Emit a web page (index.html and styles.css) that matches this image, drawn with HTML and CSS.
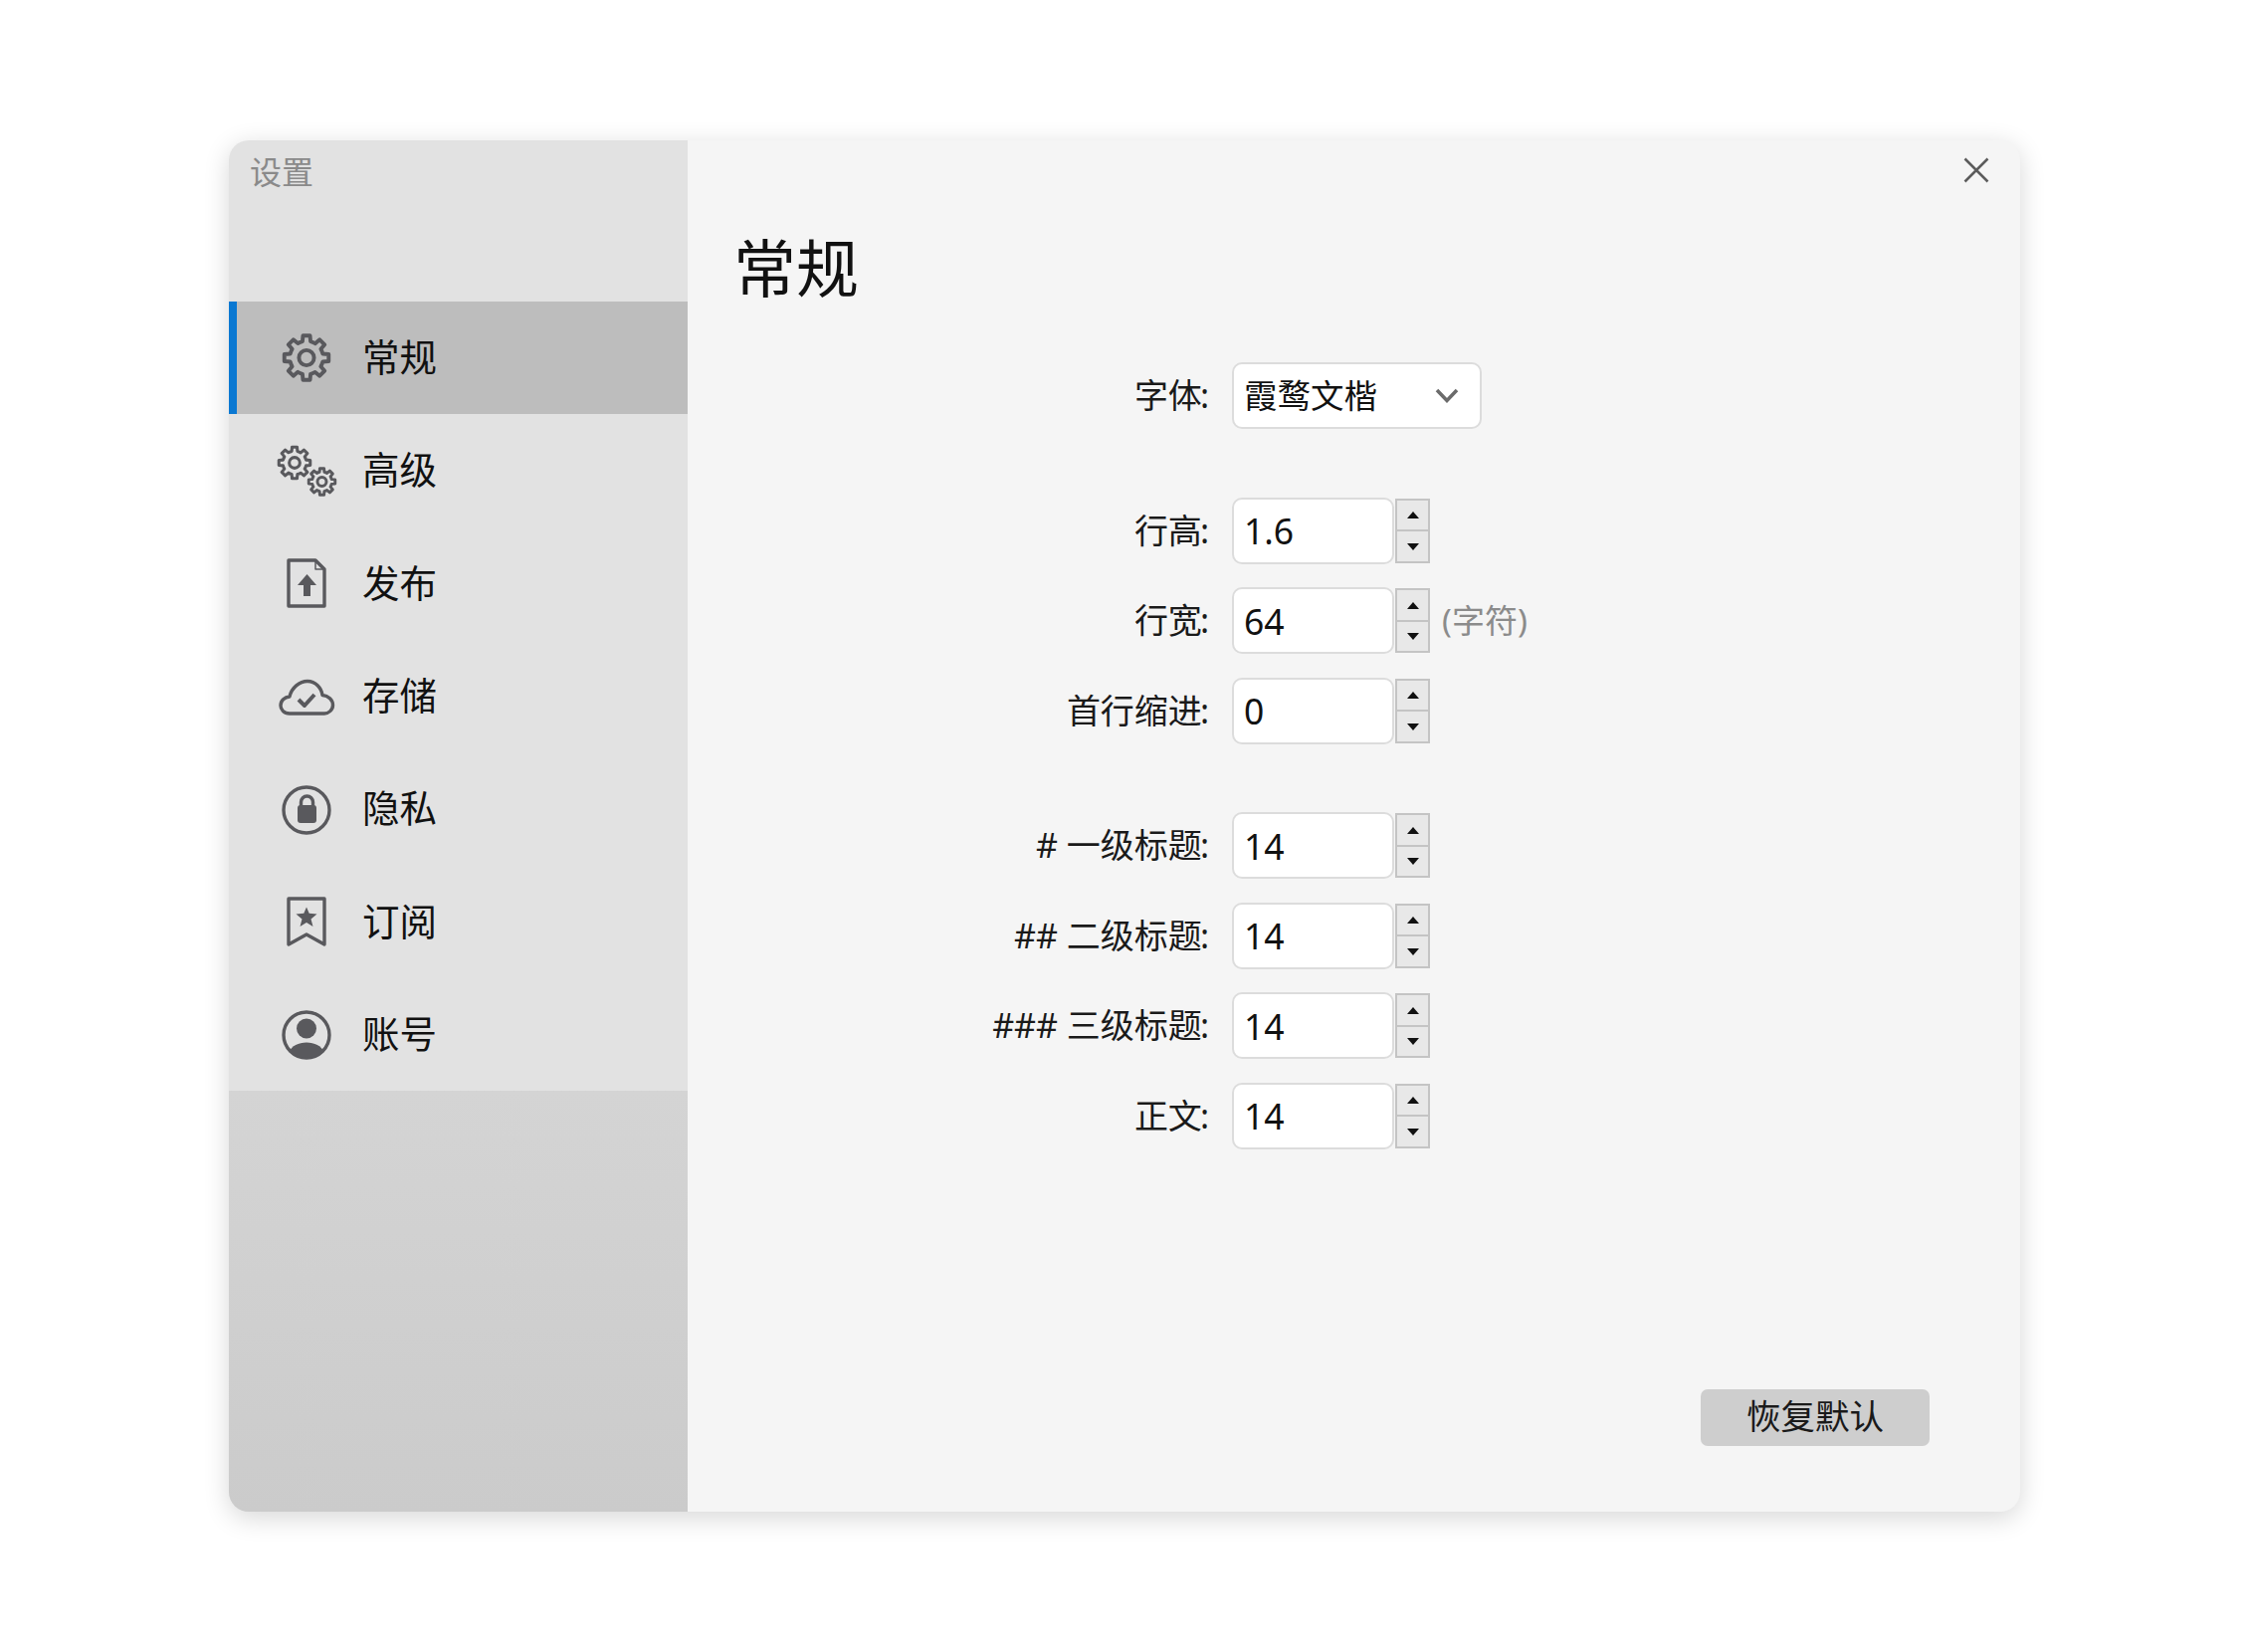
FILE: index.html
```html
<!DOCTYPE html>
<html lang="zh-CN">
<head>
<meta charset="utf-8">
<title>设置</title>
<link rel="stylesheet" href="styles.css">
</head>
<body>
<svg class="defs" width="0" height="0"><defs>
<path id="gear" d="M7.96-1.98L10.86-1.72L10.86 1.72L7.96 1.98A8.2 8.2 0 0 1 7 4.23L8.9 6.46L6.46 8.9L4.23 7.03A8.2 8.2 0 0 1 1.98 7.96L1.72 10.86L-1.72 10.86L-1.98 7.96A8.2 8.2 0 0 1-4.23 7L-6.46 8.9L-8.9 6.46L-7.03 4.23A8.2 8.2 0 0 1-7.96 1.98L-10.86 1.72L-10.86-1.72L-7.96-1.98A8.2 8.2 0 0 1-7-4.23L-8.9-6.46L-6.46-8.9L-4.23-7.03A8.2 8.2 0 0 1-1.98-7.96L-1.72-10.86L1.72-10.86L1.98-7.96A8.2 8.2 0 0 1 4.23-7L6.46-8.9L8.9-6.46L7.03-4.23A8.2 8.2 0 0 1 7.96-1.98Z"/>
</defs></svg>
<main class="window">
  <aside class="sidebar">
    <div class="app-title">设置</div>
    <nav class="nav">
      <a class="nav-item active">
        <svg class="nav-icon" viewBox="0 0 64 52"><g transform="translate(32 25.500) scale(2.05)" class="ln gear-lg"><use href="#gear"/><circle r="3.7"/></g></svg>
        <span>常规</span>
      </a>
      <a class="nav-item">
        <svg class="nav-icon" viewBox="0 0 64 52"><g transform="translate(20 18) scale(1.45)" class="ln gear-md"><use href="#gear"/><circle r="3.7"/></g><g transform="translate(47.500 37) scale(1.22)" class="ln gear-sm"><use href="#gear"/><circle r="3.7"/></g></svg>
        <span>高级</span>
      </a>
      <a class="nav-item">
        <svg class="nav-icon" viewBox="0 0 64 52"><path class="ln" d="M14 3H41L50 12V49H14Z"/><path class="ln thin" d="M41 3V12H50"/><path class="fl" d="M32.500 17L42 28H36V39H29V28H23Z"/></svg>
        <span>发布</span>
      </a>
      <a class="nav-item">
        <svg class="nav-icon" viewBox="0 0 64 52"><path class="ln" d="M15 43C9 43 6 38.500 6 35C6 30 10 26.500 15 26C17 17 25 10.500 33 10.500C41 10.500 47 17 48 24.500C54 25 58.500 29.500 58.500 34.500C58.500 39.500 54 43 50 43Z"/><path class="ln chk" d="M24 29L30 35L40 24"/></svg>
        <span>存储</span>
      </a>
      <a class="nav-item">
        <svg class="nav-icon" viewBox="0 0 64 52"><circle class="ln" cx="32" cy="27" r="23"/><path class="ln" d="M26.500 23V19a6 6 0 0 1 12 0V23"/><rect class="fl" x="23" y="22" width="19" height="18" rx="3"/></svg>
        <span>隐私</span>
      </a>
      <a class="nav-item">
        <svg class="nav-icon" viewBox="0 0 64 52"><path class="ln" d="M14 3H50V49L32 39L14 49Z"/><path class="fl" d="M32 11.500L34.700 17.800L42.500 18.500L36.500 23.500L38.500 31L32 27L25.500 31L27.500 23.500L21.500 18.500L29.300 17.800Z"/></svg>
        <span>订阅</span>
      </a>
      <a class="nav-item">
        <svg class="nav-icon" viewBox="0 0 64 52"><circle class="ln" cx="32" cy="27" r="23"/><circle class="fl" cx="32" cy="20.500" r="10"/><path class="fl" d="M14.500 44C17 38 24 34.500 32 34.500C40 34.500 47 38 49.500 44C45 48 39 50 32 50C25 50 19 48 14.500 44Z"/></svg>
        <span>账号</span>
      </a>
    </nav>
    <div class="sidebar-rest"></div>
  </aside>
  <section class="content">
    <button class="close" aria-label="关闭"><svg viewBox="0 0 26 26" width="26" height="26"><path d="M1.500 1.500L24.500 24.500M24.500 1.500L1.500 24.500"/></svg></button>
    <h1 class="heading">常规</h1>
    <form class="form">
      <div class="row group">
        <label class="lbl">字体<i>:</i></label>
        <div class="select"><span>霞鹜文楷</span><svg class="chev" viewBox="0 0 24 15" width="24" height="15"><path d="M2 2L12 12.500L22 2"/></svg></div>
      </div>
      <div class="row">
        <label class="lbl">行高<i>:</i></label>
        <div class="num">1.6</div>
        <div class="spin"><b class="up"></b><b class="down"></b></div>
      </div>
      <div class="row">
        <label class="lbl">行宽<i>:</i></label>
        <div class="num">64</div>
        <div class="spin"><b class="up"></b><b class="down"></b></div>
        <span class="unit">(字符)</span>
      </div>
      <div class="row group">
        <label class="lbl">首行缩进<i>:</i></label>
        <div class="num">0</div>
        <div class="spin"><b class="up"></b><b class="down"></b></div>
      </div>
      <div class="row">
        <label class="lbl"># 一级标题<i>:</i></label>
        <div class="num">14</div>
        <div class="spin"><b class="up"></b><b class="down"></b></div>
      </div>
      <div class="row">
        <label class="lbl">## 二级标题<i>:</i></label>
        <div class="num">14</div>
        <div class="spin"><b class="up"></b><b class="down"></b></div>
      </div>
      <div class="row">
        <label class="lbl">### 三级标题<i>:</i></label>
        <div class="num">14</div>
        <div class="spin"><b class="up"></b><b class="down"></b></div>
      </div>
      <div class="row">
        <label class="lbl">正文<i>:</i></label>
        <div class="num">14</div>
        <div class="spin"><b class="up"></b><b class="down"></b></div>
      </div>
    </form>
    <div class="actions"><button class="reset" type="button">恢复默认</button></div>
  </section>
</main>
</body>
</html>
```
FILE: styles.css
```css
* { box-sizing: border-box; }
html, body { margin: 0; height: 100%; }
body {
  background: #fff;
  padding: 141px 230px 0;
  font-family: "Noto Sans", "Noto Sans CJK SC", sans-serif;
  color: #111;
}
.defs { position: absolute; }
.window {
  display: flex;
  width: 1800px;
  height: 1378px;
  border-radius: 20px;
  overflow: hidden;
  box-shadow: 0 6px 26px rgba(0,0,0,.16);
  background: #f5f5f5;
}
.sidebar { width: 461px; display: flex; flex-direction: column; background: #e2e2e2; }
.app-title { height: 162px; padding: 12px 0 0 21px; font-size: 32px; line-height: 40px; color: #8a8a8a; }
.nav { display: flex; flex-direction: column; }
.nav-item {
  height: 113.300px; display: flex; align-items: center; gap: 24px;
  padding-left: 46px; font-size: 37.500px; line-height: 48px; color: #111;
}
.nav-item span { padding-bottom: 1px; }
.nav-item.active { background: #bdbdbd; border-left: 8px solid #0a78d2; padding-left: 38px; }
.nav-icon { width: 64px; height: 52px; flex: none; }
.ln { fill: none; stroke: #59595d; stroke-width: 3.400; stroke-linejoin: round; }
.ln.thin { stroke-width: 1.500; }
.ln.chk { stroke-width: 4; }
.ln.gear-lg { stroke-width: 1.900; }
.ln.gear-md { stroke-width: 2.100; }
.ln.gear-sm { stroke-width: 2.400; }
.fl { fill: #59595d; }
.sidebar-rest { flex: 1; background: linear-gradient(#d4d4d4, #cbcbcb); }
.content { flex: 1; position: relative; padding: 83px 46px 0; display: flex; flex-direction: column; }
.close { position: absolute; top: 17px; right: 31px; padding: 0; border: 0; background: none; line-height: 0; }
.close path { fill: none; stroke: #5c5c5c; stroke-width: 2.500; }
.heading { margin: 0; font-size: 63px; font-weight: 400; line-height: 90px; color: #111; }
.form { margin-top: 50px; display: flex; flex-direction: column; gap: 23.500px; flex: none; }
.row { display: flex; align-items: center; height: 67px; }
.row.group { margin-bottom: 45px; }
.lbl { width: 478px; text-align: right; margin-right: 23px; font-size: 34px; line-height: 46px; padding-bottom: 1px; white-space: nowrap; color: #1a1a1a; flex: none; }
.lbl i { font-style: normal; margin-left: -2px; }
.select, .num {
  height: 67px; background: #fff; border: 2px solid #dcdcdc; border-radius: 10px;
  font-size: 35.500px; display: flex; align-items: center; padding-left: 10px;
}
.select { width: 251px; justify-content: space-between; padding-right: 21px; font-size: 33.500px; line-height: 44px; padding-bottom: 1px; }
.chev path { fill: none; stroke: #6b6b6b; stroke-width: 3.500; }
.num { width: 163px; }
.spin { margin-left: 1px; width: 35px; height: 65px; display: flex; flex-direction: column; border: 2px solid #c4c4c4; background: #c4c4c4; gap: 2px; }
.spin b { flex: 1; position: relative; background: #e8e8e8; }
.spin b::after {
  content: ""; position: absolute; left: 50%; top: 50%; margin: -3px 0 0 -6px;
  border-left: 6px solid transparent; border-right: 6px solid transparent;
}
.spin .up::after { border-bottom: 7px solid #111; }
.spin .down::after { border-top: 7px solid #111; }
.unit { margin-left: 12px; font-size: 33px; line-height: 44px; color: #8b8b8b; }
.actions { margin-top: auto; padding: 0 45px 66px 0; display: flex; justify-content: flex-end; }
.reset {
  width: 230px; height: 57px; border: 0; border-radius: 7px; background: #cecece;
  font: inherit; font-size: 34.500px; line-height: 50px; padding: 0 0 3px; color: #1a1a1a;
}
```
